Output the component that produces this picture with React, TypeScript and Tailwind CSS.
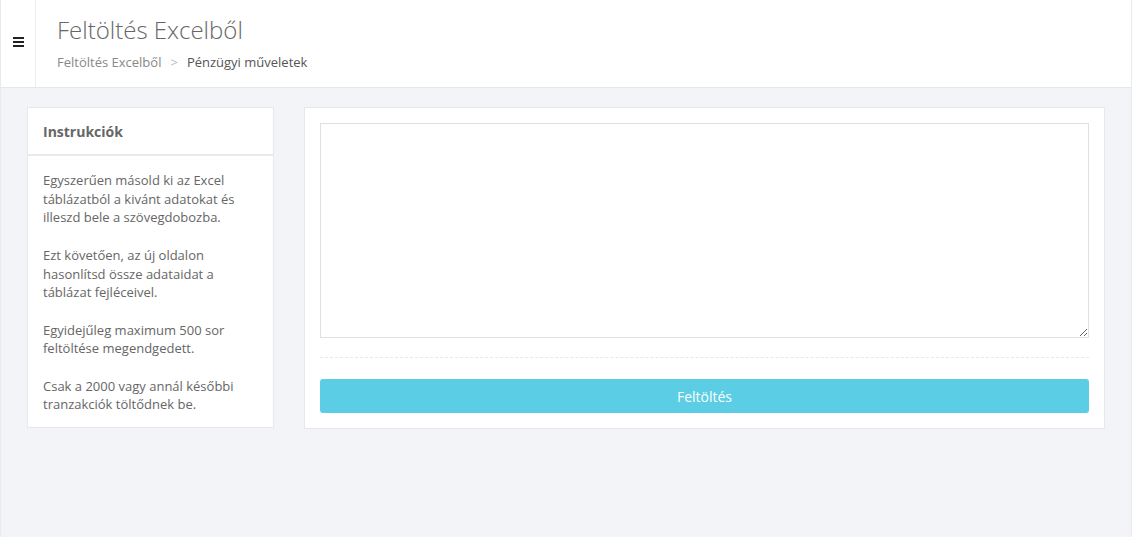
export default function App() {
  return (
    <div
      className="min-h-[537px] bg-[#f3f4f8] border-l border-r border-[#e9eaee] text-[#666]"
      style={{ fontFamily: '"Open Sans", "Noto Sans", sans-serif' }}
    >
      <header className="flex h-[88px] bg-white border-b border-[#e6e8ec]">
        <div className="flex w-[35px] items-center justify-center border-r border-[#ebedf0]">
          <svg width="11" height="10" viewBox="0 0 11 10" className="mt-[-4px]">
            <rect x="0" y="0" width="11" height="2" fill="#222" />
            <rect x="0" y="4" width="11" height="2" fill="#222" />
            <rect x="0" y="8" width="11" height="2" fill="#222" />
          </svg>
        </div>
        <div className="pl-[21px] pt-[14px]">
          <h1 className="text-[24px] font-light leading-[32px] text-[#666]">Feltöltés Excelből</h1>
          <nav className="mt-[6px] flex items-center text-[13px] leading-[20px]">
            <span className="text-[#888]">Feltöltés Excelből</span>
            <span className="mx-[9px] text-[#bbb]">&gt;</span>
            <span className="text-[#555]">Pénzügyi műveletek</span>
          </nav>
        </div>
      </header>

      <main className="flex items-start gap-[30px] px-[26px] pt-[19px]">
        <section className="w-[247px] shrink-0 bg-white border border-[#e6e8ec]">
          <div className="h-[48px] flex items-center px-[15px] border-b-2 border-[#e8eaee]">
            <h2 className="text-[14px] font-bold text-[#666]">Instrukciók</h2>
          </div>
          <div className="px-[15px] pt-[15px] pb-[13px] text-[13px] leading-[18.7px] text-[#666] space-y-[18.7px]">
            <p>Egyszerűen másold ki az Excel táblázatból a kivánt adatokat és illeszd bele a szövegdobozba.</p>
            <p>Ezt követően, az új oldalon hasonlítsd össze adataidat a táblázat fejléceivel.</p>
            <p>Egyidejűleg maximum 500 sor feltöltése megendgedett.</p>
            <p>Csak a 2000 vagy annál későbbi tranzakciók töltődnek be.</p>
          </div>
        </section>

        <section className="flex-1 bg-white border border-[#e6e8ec] px-[15px] pt-[15px] pb-[15px]">
          <textarea className="block w-full h-[215px] border border-[#e0e0e0] outline-none resize-y" />
          <div className="mt-[19px] border-t border-dashed border-[#e8e8e8]" />
          <button className="mt-[21px] w-full h-[34px] rounded-[3px] bg-[#5bcde4] text-white text-[14px]">
            Feltöltés
          </button>
        </section>
      </main>
    </div>
  )
}
